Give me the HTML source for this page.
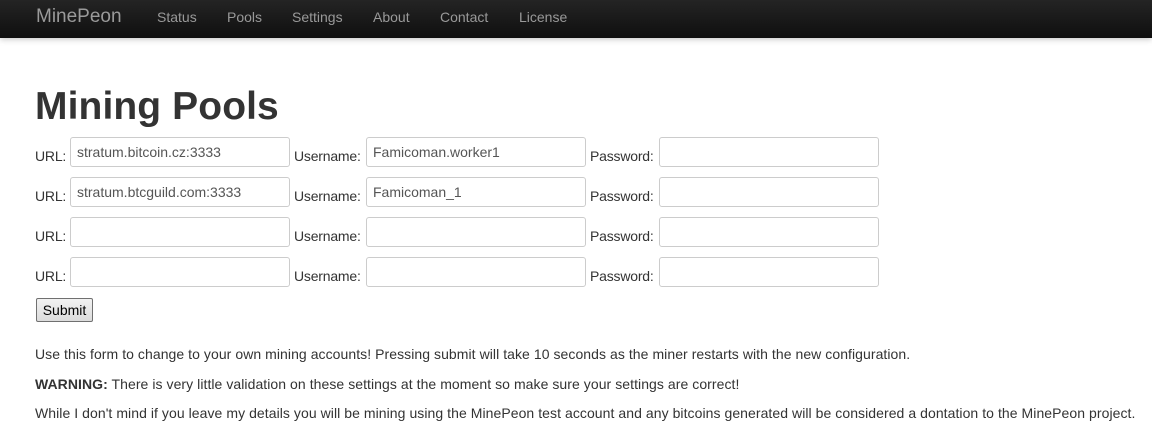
<!DOCTYPE html>
<html><head><style>
body{margin:0;width:1152px;height:431px;overflow:hidden;background:#fff;font-family:"Liberation Sans",Arial,sans-serif;color:#333;font-size:14px;position:relative}
.nav{position:absolute;left:0;top:0;width:1152px;height:38px;background:linear-gradient(#242424,#0f0f0f);box-shadow:0 1px 6px rgba(0,0,0,.25)}
.nav span{position:absolute;top:9px;color:#999;font-size:14px}
.nav .b{font-size:19px;top:6px;left:36px;color:#9a9a9a}
h1{position:absolute;left:35px;top:85px;margin:0;font-size:39px;font-weight:bold;color:#333;line-height:44px;letter-spacing:.1px}
.l{position:absolute;font-size:14px;color:#333;letter-spacing:-.2px}
.i{position:absolute;width:218px;height:28px;border:1px solid #ccc;border-radius:3px;font-size:14px;color:#555;box-sizing:content-box}
.i span{position:absolute;left:6px;top:6px}
.btn{position:absolute;left:36px;top:298px;width:55px;height:22px;border:1px solid #707070;border-radius:2px;background:linear-gradient(#f2f2f2,#dcdcdc);font-size:14px;color:#000;text-align:center;line-height:22px}
p{position:absolute;left:35px;margin:0;font-size:14px;white-space:nowrap;letter-spacing:.06px}
</style></head><body>
<div class="nav"><span class="b">MinePeon</span><span style="left:157px">Status</span><span style="left:227px">Pools</span><span style="left:292px">Settings</span><span style="left:373px">About</span><span style="left:440px">Contact</span><span style="left:519px">License</span></div>
<h1>Mining Pools</h1>

<div class="l" style="left:35px;top:148px">URL:</div><div class="i" style="left:70px;top:137px"><span>stratum.bitcoin.cz:3333</span></div>
<div class="l" style="left:294px;top:148px">Username:</div><div class="i" style="left:366px;top:137px"><span>Famicoman.worker1</span></div>
<div class="l" style="left:590px;top:148px">Password:</div><div class="i" style="left:659px;top:137px"></div>

<div class="l" style="left:35px;top:188px">URL:</div><div class="i" style="left:70px;top:177px"><span>stratum.btcguild.com:3333</span></div>
<div class="l" style="left:294px;top:188px">Username:</div><div class="i" style="left:366px;top:177px"><span>Famicoman_1</span></div>
<div class="l" style="left:590px;top:188px">Password:</div><div class="i" style="left:659px;top:177px"></div>

<div class="l" style="left:35px;top:228px">URL:</div><div class="i" style="left:70px;top:217px"></div>
<div class="l" style="left:294px;top:228px">Username:</div><div class="i" style="left:366px;top:217px"></div>
<div class="l" style="left:590px;top:228px">Password:</div><div class="i" style="left:659px;top:217px"></div>

<div class="l" style="left:35px;top:268px">URL:</div><div class="i" style="left:70px;top:257px"></div>
<div class="l" style="left:294px;top:268px">Username:</div><div class="i" style="left:366px;top:257px"></div>
<div class="l" style="left:590px;top:268px">Password:</div><div class="i" style="left:659px;top:257px"></div>

<div class="btn">Submit</div>
<p style="top:346px">Use this form to change to your own mining accounts! Pressing submit will take 10 seconds as the miner restarts with the new configuration.</p>
<p style="top:376px"><b>WARNING:</b> There is very little validation on these settings at the moment so make sure your settings are correct!</p>
<p style="top:405px">While I don't mind if you leave my details you will be mining using the MinePeon test account and any bitcoins generated will be considered a dontation to the MinePeon project.</p>
</body></html>
